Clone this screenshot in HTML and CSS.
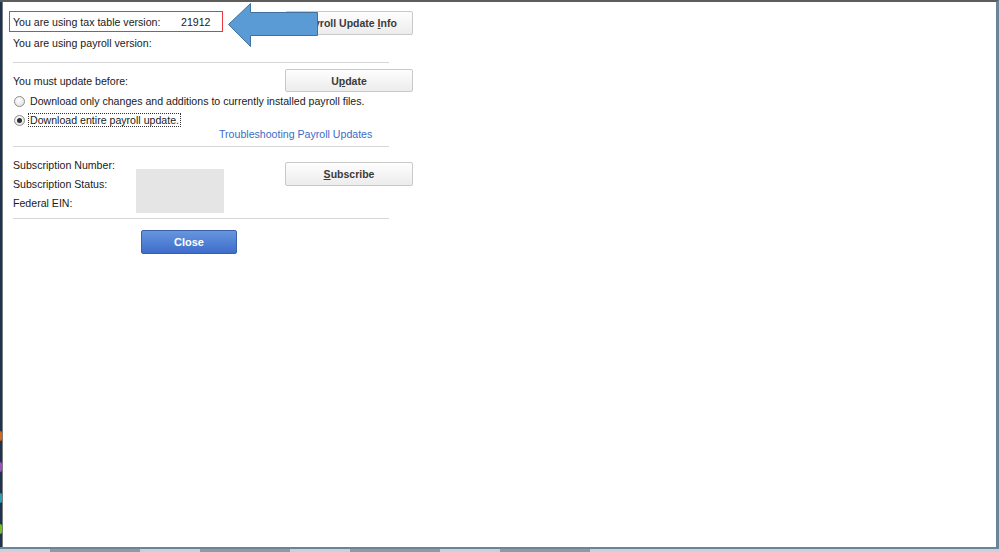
FILE: index.html
```html
<!DOCTYPE html>
<html lang="en">
<head>
  <meta charset="UTF-8">
  <title>Payroll Update</title>
  <link rel="stylesheet" href="styles.css">
</head>
<body>
  <div class="screen">
    <div class="window">
      <!-- left edge of app behind dialog -->
      <div class="side-strip">
        <span class="dot dot-orange"></span>
        <span class="dot dot-purple"></span>
        <span class="dot dot-teal"></span>
        <span class="dot dot-green"></span>
      </div>

      <div class="dialog">
        <div class="row row-top">
          <div class="highlight-box">
            <span class="label-fixed">You are using tax table version:</span>
            <span>21912</span>
          </div>
          <button class="btn">Payroll Update <u>I</u>nfo</button>
        </div>

        <div class="line-row">You are using payroll version:</div>
        <hr class="divider divider-1">

        <div class="row row-update">
          <span class="update-label">You must update before:</span>
          <button class="btn">U<u>p</u>date</button>
        </div>

        <div class="radio-row radio-row-1">
          <span class="radio"></span>
          <span>Download only changes and additions to currently installed payroll files.</span>
        </div>
        <div class="radio-row radio-row-2">
          <span class="radio checked"></span>
          <span class="focus-text">Download entire payroll update.</span>
        </div>

        <div class="link-row"><a class="link">Troubleshooting Payroll Updates</a></div>
        <hr class="divider divider-2">

        <div class="sub-block">
          <div class="sub-labels">
            <div>Subscription Number:</div>
            <div>Subscription Status:</div>
            <div>Federal EIN:</div>
          </div>
          <div class="masked-box"></div>
          <button class="btn btn-subscribe"><u>S</u>ubscribe</button>
        </div>
        <hr class="divider divider-3">

        <button class="close-btn">Close</button>

        <!-- Callout arrow pasted over the screenshot -->
        <svg class="callout-arrow" width="94" height="46" viewBox="0 0 94 46">
          <path d="M2.5 22.5 L24.5 1.5 L24.5 10.5 L91.5 10.5 L91.5 33.5 L24.5 33.5 L24.5 44.5 Z"
                fill="#5b9bd5" stroke="#41719c" stroke-width="1"/>
        </svg>
      </div>
    </div>
    <div class="taskbar">
      <span class="task-item"></span>
      <span class="task-item"></span>
      <span class="task-item"></span>
      <span class="task-item"></span>
    </div>
  </div>
</body>
</html>
```

FILE: styles.css
```css
/* General Reset */
* {
  margin: 0;
  padding: 0;
  box-sizing: border-box;
}

body {
  font-family: 'Liberation Sans', Arial, sans-serif;
  font-size: 10.6px;
  color: #1a1a1a;
  background-color: #ffffff;
}

.screen {
  width: 999px;
  height: 552px;
  display: flex;
  flex-direction: column;
}

/* Window frame */
.window {
  flex: 1;
  display: flex;
  border-top: 2px solid #5c5c5c;
  border-right: 3px solid #6a8498;
}

.side-strip {
  width: 3px;
  background-color: #7a7a7a;
  border-left: 2px solid #1d3350;
  display: flex;
  flex-direction: column;
  padding-top: 429px;
  gap: 21px;
}

.dot {
  width: 2px;
  height: 10px;
  margin-left: -2px;
  border-radius: 0 3px 3px 0;
}

.dot-orange { background-color: #d2691e; }
.dot-purple { background-color: #9b4fc0; }
.dot-teal { background-color: #2aa3b0; }
.dot-green { background-color: #6cc02a; }

/* Dialog content */
.dialog {
  position: relative;
  width: 404px;
  margin-left: 6px;
  padding-top: 9px;
  display: flex;
  flex-direction: column;
}

.row {
  display: flex;
  justify-content: space-between;
}

.row-top {
  height: 24px;
}

.highlight-box {
  width: 214px;
  height: 21px;
  border: 1px solid #e8383d;
  padding-left: 3px;
  display: flex;
  align-items: center;
}

.label-fixed {
  width: 168px;
}

.btn {
  width: 128px;
  height: 24px;
  font-family: 'Liberation Sans', Arial, sans-serif;
  font-size: 10.5px;
  font-weight: bold;
  color: #3a3a3a;
  background: linear-gradient(#fefefe, #ececec);
  border: 1px solid #c9c9c9;
  border-radius: 2px;
}

.line-row {
  height: 14px;
  line-height: 14px;
  margin-top: 1px;
  padding-left: 4px;
}

.divider {
  border: none;
  height: 1px;
  background-color: #d6d6d6;
  width: 376px;
  margin-left: 4px;
}

.divider-1 { margin-top: 12px; }
.divider-2 { margin-top: 5px; }
.divider-3 { margin-top: 5px; }

.row-update {
  margin-top: 6px;
  height: 23px;
}

.row-update .btn {
  height: 23px;
}

.update-label {
  padding-left: 4px;
  padding-top: 6px;
}

.radio-row {
  height: 14px;
  display: flex;
  align-items: center;
  gap: 5px;
  padding-left: 5px;
}

.radio-row-1 { margin-top: 2px; }
.radio-row-2 { margin-top: 5px; }

.radio {
  width: 11px;
  height: 11px;
  border-radius: 50%;
  border: 1px solid #8c8c8c;
  background: radial-gradient(circle at 40% 35%, #ffffff, #dcdcdc);
  display: flex;
  align-items: center;
  justify-content: center;
}

.radio.checked::after {
  content: "";
  width: 5px;
  height: 5px;
  border-radius: 50%;
  background-color: #2e2e2e;
}

.focus-text {
  outline: 1px dotted #333333;
  padding: 0 1px;
  margin-left: -1px;
}

.link-row {
  height: 14px;
  line-height: 14px;
  padding-left: 210px;
}

.link {
  color: #3a6cc4;
}

/* Subscription section */
.sub-block {
  display: flex;
  margin-top: 9px;
  height: 57px;
}

.sub-labels {
  width: 127px;
  padding-left: 4px;
}

.sub-labels div {
  height: 19px;
  line-height: 19px;
}

.masked-box {
  width: 88px;
  height: 44px;
  margin-top: 13px;
  background-color: #e5e5e5;
}

.btn-subscribe {
  margin-left: auto;
  margin-top: 6px;
  height: 24px;
}

.close-btn {
  width: 96px;
  height: 24px;
  margin-top: 11px;
  margin-left: 132px;
  font-family: 'Liberation Sans', Arial, sans-serif;
  font-size: 11px;
  font-weight: bold;
  color: #ffffff;
  background: linear-gradient(#6596de, #3f6dcb);
  border: 1px solid #3b5fa8;
  border-radius: 2px;
}

/* Callout arrow over the dialog */
.callout-arrow {
  position: absolute;
  left: 217px;
  top: 0;
}

/* Taskbar at the bottom */
.taskbar {
  height: 5px;
  border-top: 2px solid #6a8498;
  background-color: #c9d2da;
  display: flex;
  gap: 60px;
  padding-left: 50px;
}

.task-item {
  width: 90px;
  height: 3px;
  background-color: #8f9aa4;
}
```
